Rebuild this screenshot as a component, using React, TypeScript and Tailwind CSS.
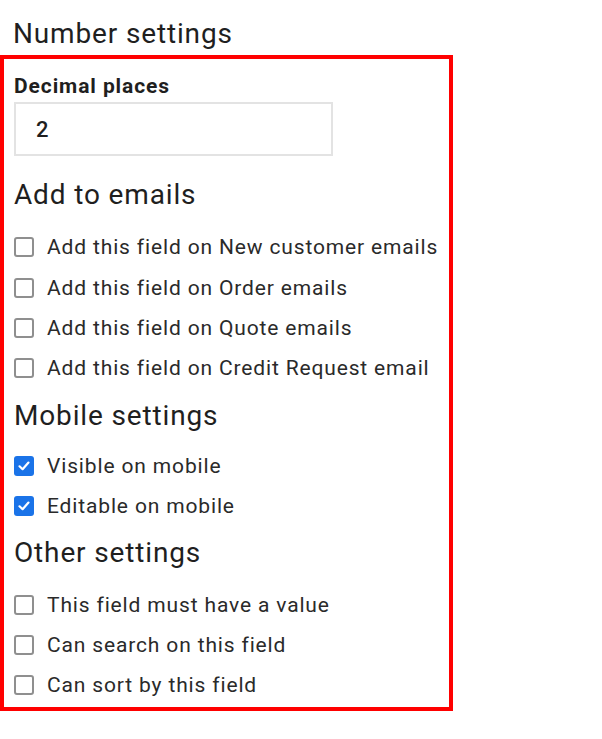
import React from "react";

const font = { fontFamily: "Roboto, 'Noto Sans', Arial, sans-serif" };

function Check({ checked }: { checked?: boolean }) {
  if (checked) {
    return (
      <span className="flex h-[20px] w-[20px] shrink-0 items-center justify-center rounded-[3px] bg-[#1a73e8]">
        <svg width="14" height="14" viewBox="0 0 14 14" fill="none">
          <path d="M2.5 7.3 L5.6 10.2 L11.5 3.6" stroke="#fff" strokeWidth="2.2" strokeLinecap="round" strokeLinejoin="round" />
        </svg>
      </span>
    );
  }
  return <span className="h-[20px] w-[20px] shrink-0 rounded-[3px] border-2 border-[#8f8f8f] bg-white" />;
}

function Row({ label, checked }: { label: string; checked?: boolean }) {
  return (
    <div className="flex h-[40.4px] items-center gap-[13px]">
      <Check checked={checked} />
      <span className="text-[21px] leading-[40px] tracking-[0.85px] text-[#2a2a2a]">{label}</span>
    </div>
  );
}

function Heading({ children, className = "" }: { children: React.ReactNode; className?: string }) {
  return (
    <h2 className={`text-[28px] leading-[36px] font-normal tracking-[0.85px] text-[#1f1f1f] ${className}`}>
      {children}
    </h2>
  );
}

export default function App() {
  return (
    <div className="min-h-[739px] w-[602px] bg-white pt-[16px]" style={font}>
      <Heading className="ml-[13px]">Number settings</Heading>
      <div className="mt-[3px] w-[453px] border-4 border-[#ff0000] pl-[10px] pt-[15px] pb-[1px]">
        <div className="text-[21px] font-bold leading-[24px] tracking-[0.9px] text-[#1f1f1f]">Decimal places</div>
        <div className="mt-[4px] flex h-[54px] w-[319px] items-center border-2 border-[#e3e3e3] pl-[20px] text-[22px] font-medium text-[#1f1f1f]">
          2
        </div>
        <Heading className="mt-[21px] mb-[14px]">Add to emails</Heading>
        <Row label="Add this field on New customer emails" />
        <Row label="Add this field on Order emails" />
        <Row label="Add this field on Quote emails" />
        <Row label="Add this field on Credit Request email" />
        <Heading className="mt-[9px] mb-[12px]">Mobile settings</Heading>
        <Row label="Visible on mobile" checked />
        <Row label="Editable on mobile" checked />
        <Heading className="mt-[9px] mb-[13px]">Other settings</Heading>
        <Row label="This field must have a value" />
        <Row label="Can search on this field" />
        <Row label="Can sort by this field" />
      </div>
    </div>
  );
}
